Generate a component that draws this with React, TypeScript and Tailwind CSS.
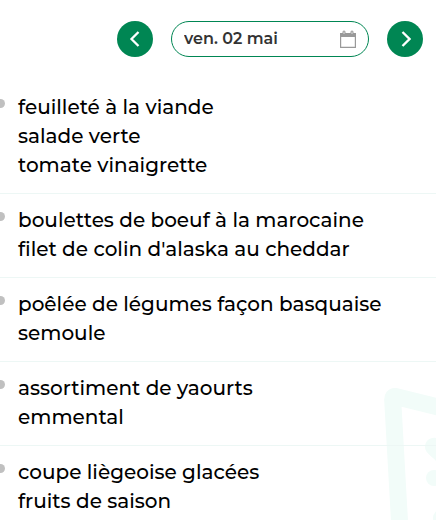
import { useState } from "react"

const dates = ["jeu. 01 mai", "ven. 02 mai", "sam. 03 mai"]

const courses = [
  ["feuilleté à la viande", "salade verte", "tomate vinaigrette"],
  ["boulettes de boeuf à la marocaine", "filet de colin d'alaska au cheddar"],
  ["poêlée de légumes façon basquaise", "semoule"],
  ["assortiment de yaourts", "emmental"],
  ["coupe liègeoise glacées", "fruits de saison"],
]

function CalendarIcon() {
  return (
    <svg width="16" height="18" viewBox="0 0 16 18" fill="none" aria-hidden="true">
      <path d="M.6 4h14.800v13.400H.6z" stroke="#999" strokeWidth="1.200" strokeLinejoin="round" />
      <path d="M0 3h16v4H0z" fill="#999" />
      <path d="M2.500 2a1.500 1.500 0 0 1 3 0V5h-3zM10.500 2a1.500 1.500 0 0 1 3 0v3h-3z" fill="#999" />
      <path d="M4 1.500V4M12 1.500V4" stroke="#ddd" />
    </svg>
  )
}

function MenuCardDrawing() {
  return (
    <svg
      className="absolute right-0 top-[380px] -z-10"
      width="60"
      height="140"
      viewBox="0 0 60 140"
      fill="none"
      aria-hidden="true"
    >
      <path
        d="M80 31.500 19.500 16.500 Q16.500 16 16.700 20 L24 150"
        stroke="#f2fcf9"
        strokeWidth="17"
        strokeLinejoin="round"
      />
      <path d="M49 67c0-6 5-10 11-9v23c-3-4-11-8-11-14z" fill="#f2fcf9" />
      <circle cx="58" cy="98" r="8" fill="#f2fcf9" />
      <circle cx="66" cy="138" r="9" fill="#f2fcf9" />
    </svg>
  )
}

export default function App() {
  const [day, setDay] = useState(1)

  return (
    <main className="relative isolate overflow-hidden bg-white font-['Montserrat','Inter',sans-serif]">
      <MenuCardDrawing />

      <header className="flex items-center justify-end gap-[18px] pt-[21px] pr-[13px]">
        <button
          type="button"
          aria-label="Jour précédent"
          onClick={() => setDay(Math.max(day - 1, 0))}
          className="flex size-9 items-center justify-center rounded-full bg-[#008653] text-white"
        >
          <svg width="12" height="16" viewBox="0 0 12 16" fill="none" aria-hidden="true">
            <path d="M9.500 1 2.500 8l7 7" stroke="currentColor" strokeWidth="2.300" />
          </svg>
        </button>

        <div className="flex h-9 w-[198px] items-center rounded-full border border-[#008653] bg-white px-3">
          <input
            type="text"
            readOnly
            aria-label="Date du menu"
            value={dates[day]}
            className="min-w-0 flex-1 text-base font-semibold text-[#333] outline-none"
          />
          <button type="button" aria-label="Choisir une date">
            <CalendarIcon />
          </button>
        </div>

        <button
          type="button"
          aria-label="Jour suivant"
          onClick={() => setDay(Math.min(day + 1, dates.length - 1))}
          className="flex size-9 items-center justify-center rounded-full bg-[#008653] text-white"
        >
          <svg width="12" height="16" viewBox="0 0 12 16" fill="none" aria-hidden="true">
            <path d="m3.500 1 7 7-7 7" stroke="currentColor" strokeWidth="2.300" />
          </svg>
        </button>
      </header>

      <ul className="-ml-1 pt-6">
        {courses.map((dishes, index) => (
          <li
            key={index}
            className="flex gap-[13px] border-b border-[#edf7f5] pt-3 pb-[13px] text-xl leading-[29px] font-medium text-black last:border-b-0"
          >
            <span className="mt-[6px] size-[9px] shrink-0 rounded-full bg-[#c0c0c0]" />
            <div>
              {dishes.map((dish) => (
                <p key={dish}>{dish}</p>
              ))}
            </div>
          </li>
        ))}
      </ul>
    </main>
  )
}
